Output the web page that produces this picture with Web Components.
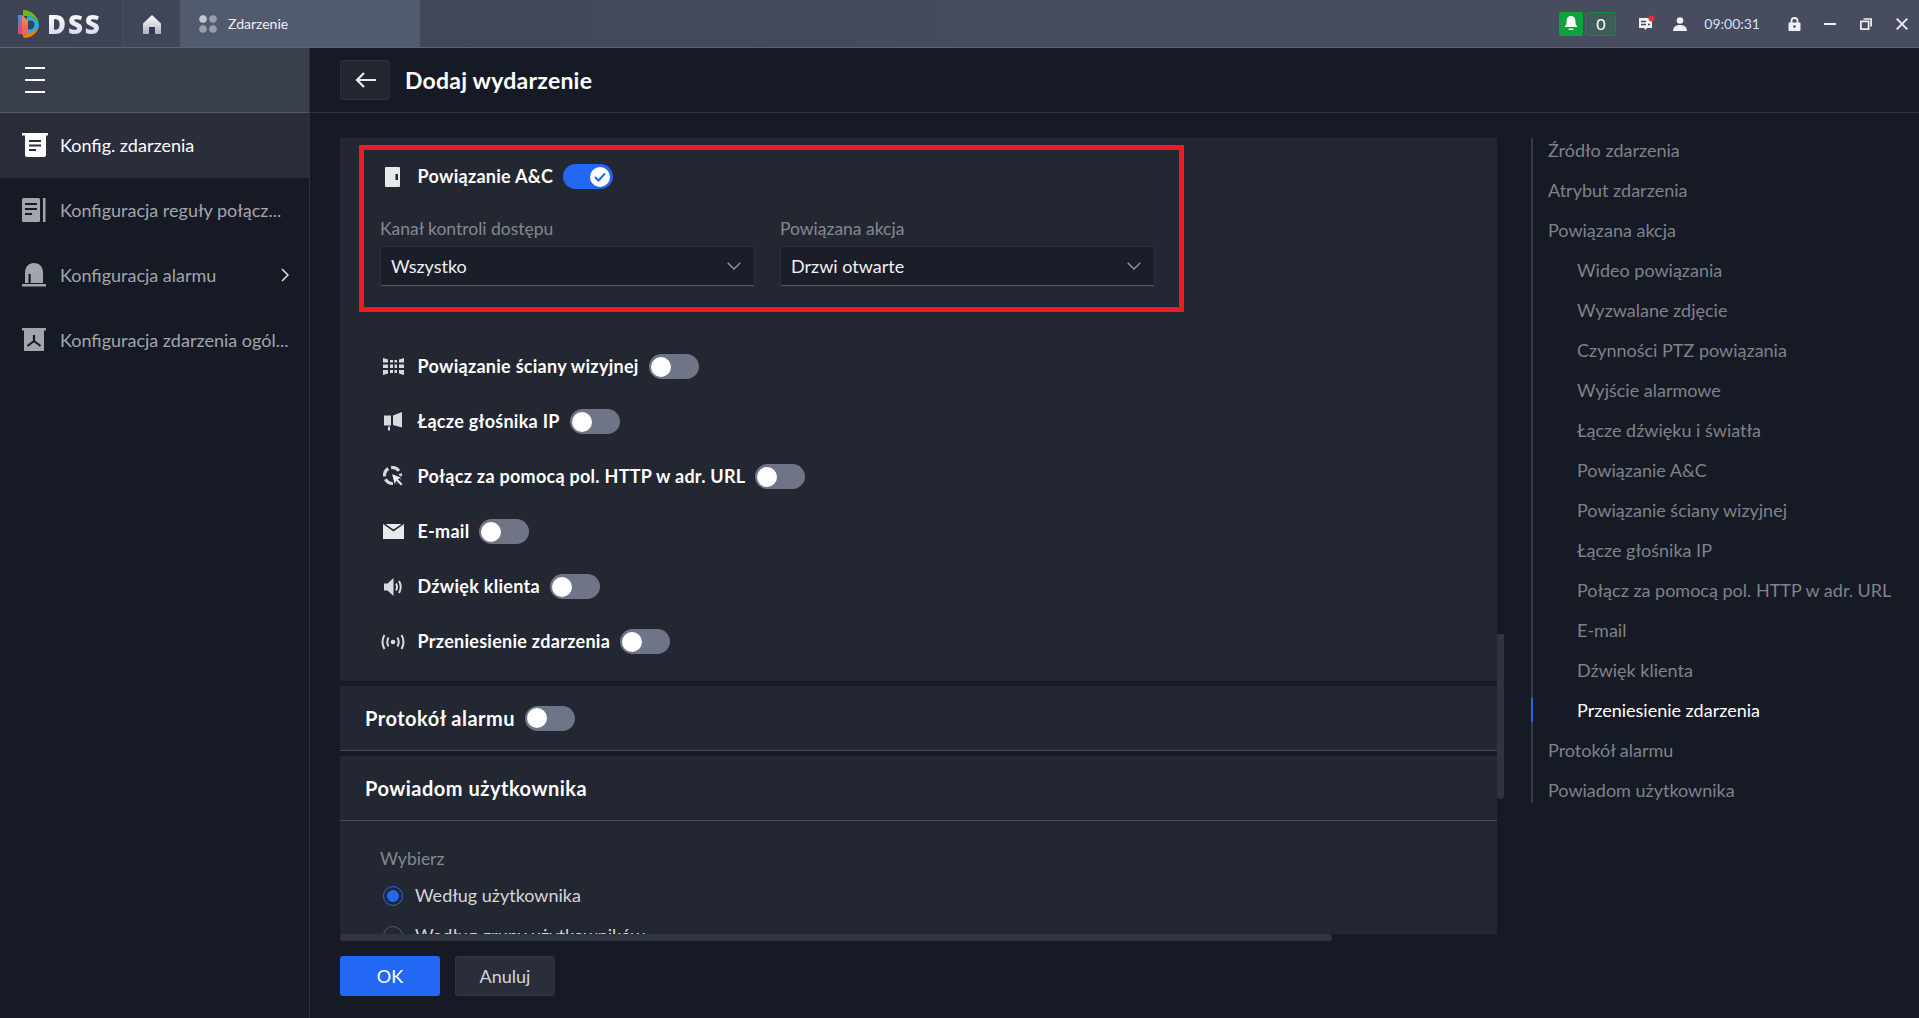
<!DOCTYPE html>
<html lang="pl"><head><meta charset="utf-8"><title>DSS</title>
<style>
html,body{margin:0;height:100%;background:#161a25;overflow:hidden}
body{font-family:Lato,"Liberation Sans",sans-serif;color:#fff}
</style></head><body>
<dss-app></dss-app>
<script>
const ICONS={
home:'<svg width="20" height="20" viewBox="0 0 20 20"><defs><linearGradient id="h" x1="0" y1="0" x2="0" y2="1"><stop offset="0" stop-color="#fff"/><stop offset="1" stop-color="#aeb2c0"/></linearGradient></defs><path fill="url(#h)" d="M10 1 19 9.500V20H13V14H7V20H1V9.500Z"/><rect x="7" y="13" width="6" height="7" fill="#2f3a52"/></svg>',
dots:'<svg width="18" height="18" viewBox="0 0 18 18" fill="#c5c8d0"><circle cx="4" cy="4" r="3.800"/><circle cx="14" cy="4" r="3.800" fill="#9a9eaa"/><circle cx="4" cy="14" r="3.800" fill="#9a9eaa"/><circle cx="14" cy="14" r="3.800" fill="#9a9eaa"/></svg>',
bell:'<svg width="14" height="15" viewBox="0 0 14 15" fill="#fff"><path d="M7 0C3.800 0 2.500 2.500 2.500 5.500V8L0.500 11H13.500L11.500 8V5.500C11.500 2.500 10.200 0 7 0Z"/><rect x="4.500" y="12.500" width="5" height="1.500" rx=".7"/></svg>',
msg:'<svg width="18" height="17" viewBox="0 0 18 17"><path fill="#eef0f4" d="M1 3H14V13H9L7.500 15 6 13H1Z"/><path stroke="#464c5d" stroke-width="1.400" d="M3 6.500H8M3 9.500H8M10 9.500H12"/><circle cx="13.500" cy="3.500" r="3" fill="#ed2a36"/></svg>',
user:'<svg width="14" height="14" viewBox="0 0 14 14" fill="#eef0f4"><circle cx="7" cy="3.500" r="3.300"/><path d="M0 14C0 10 3 8 7 8S14 10 14 14Z"/></svg>',
lock:'<svg width="13" height="14" viewBox="0 0 13 14"><path fill="none" stroke="#eef0f4" stroke-width="1.800" d="M3.500 6V4a3 3 0 0 1 6 0V6"/><rect x="0.500" y="5.500" width="12" height="8.500" rx="1" fill="#eef0f4"/><circle cx="6.500" cy="9.500" r="1.300" fill="#464c5d"/></svg>',
min:'<svg width="12" height="12" viewBox="0 0 12 12"><rect y="5" width="12" height="2" fill="#eef0f4"/></svg>',
restore:'<svg width="12" height="12" viewBox="0 0 12 12" fill="none" stroke="#eef0f4" stroke-width="1.700"><rect x=".9" y="3.400" width="7.700" height="7.700"/><path d="M3.500 1H11.100V8.500"/></svg>',
close:'<svg width="12" height="12" viewBox="0 0 12 12" stroke="#eef0f4" stroke-width="1.800"><path d="M.7.7 11.300 11.300M11.300.7.700 11.300"/></svg>',
ev:'<svg width="26" height="24" viewBox="0 0 26 24"><path fill="currentColor" d="M0 0H26V2.500H24V22a2 2 0 0 1-2 2H5a2 2 0 0 1-2-2V2.500H0Z"/><path stroke="#2a2e3a" stroke-width="2.200" d="M7 8H19M7 12.500H19M7 17H14"/></svg>',
rule:'<svg width="24" height="24" viewBox="0 0 24 24"><rect width="18" height="24" rx="1.500" fill="currentColor"/><rect x="21" width="2.500" height="24" fill="currentColor"/><path stroke="#161a25" stroke-width="2.200" d="M3 6H15M3 11H15M3 16H10"/></svg>',
alarm:'<svg width="24" height="24" viewBox="0 0 24 24"><path fill="currentColor" d="M3 20V10C3 4 6.500 0 12 0S21 4 21 10V20Z"/><rect y="21" width="24" height="2.500" fill="currentColor"/><rect x="6.500" y="11" width="2.200" height="9" fill="#161a25"/></svg>',
gen:'<svg width="24" height="24" viewBox="0 0 24 24"><path fill="currentColor" d="M0 0H24V2.500H22V23H2V2.500H0Z"/><path fill="none" stroke="#161a25" stroke-width="2.200" d="M12 7V13M12 13 5.500 18M12 13 18.500 18"/></svg>',
door:'<svg width="16" height="20" viewBox="0 0 16 20"><rect width="15" height="20" rx="1" fill="#e8e9ec"/><rect x="10.500" y="7" width="2.500" height="6" fill="#232732"/></svg>',
wall:'<svg width="21" height="17" viewBox="0 0 21 17" fill="#d8dade"><path d="M0 0 5 1.500V4.500H0ZM0 6.500H5V10H0ZM0 12H5V15.500L0 17ZM7 2H10V4.500H7ZM7 6.500H10V10H7ZM7 12H10V15H7ZM11.500 2H14V4.500H11.500ZM11.500 6.500H14V10H11.500ZM11.500 12H14V15H11.500ZM16 1.500 21 0V4.500H16ZM16 6.500H21V10H16ZM16 12H21V17L16 15.500Z"/></svg>',
spk:'<svg width="19" height="19" viewBox="0 0 19 19" fill="#d8dade"><rect y="3.500" width="7" height="10"/><path d="M9 3.500 18 0V15.500L9 13Z"/><rect x="4" y="14.500" width="2" height="4"/></svg>',
url:'<svg width="21" height="21" viewBox="0 0 21 21" fill="none"><circle cx="9.500" cy="9.500" r="8" stroke="#d8dade" stroke-width="3.200" stroke-dasharray="9 3"/><path fill="#eceef0" stroke="#232732" stroke-width="1.400" d="M8 7 20 11.500 16 13.500 20.500 18 18 20.500 13.500 16 11.500 20Z"/></svg>',
mail:'<svg width="21" height="15" viewBox="0 0 21 15"><path fill="#e8e9ec" d="M0 0 10.500 7.500 21 0V15H0ZM2.500 0H18.500L10.500 5.500Z"/></svg>',
snd:'<svg width="19" height="18" viewBox="0 0 19 18"><path fill="#d8dade" d="M0 5.500H3.500L9.500 0V18L3.500 12.500H0Z"/><path fill="none" stroke="#d8dade" stroke-width="2" d="M12 5.500Q14 9 12 12.500M15 3Q18.500 9 15 15"/></svg>',
ev2:'<svg width="24" height="16" viewBox="0 0 24 16" fill="none" stroke="#d8dade" stroke-width="2"><circle cx="12" cy="8" r="2.300" fill="#d8dade" stroke="none"/><path d="M7.500 3.500Q5 8 7.500 12.500M16.500 3.500Q19 8 16.500 12.500M3.500 1Q-.5 8 3.500 15M20.500 1Q24.500 8 20.500 15"/></svg>',
back:'<svg width="21" height="16" viewBox="0 0 21 16" fill="none" stroke="#e8e9ec" stroke-width="2.200"><path d="M21 8H2M9 1 2 8 9 15"/></svg>',
chev:'<svg width="14" height="8" viewBox="0 0 14 8" fill="none" stroke="#8d919b" stroke-width="1.500"><path d="M.7.7 7 7 13.300.7"/></svg>',
right:'<svg width="8" height="14" viewBox="0 0 8 14" fill="none" stroke="#e0e2e6" stroke-width="1.500"><path d="M1 1 7 7 1 13"/></svg>',
logo:'<svg width="21" height="28" viewBox="0 0 21 28"><defs><linearGradient id="l1" x1="0" y1="0" x2="0" y2="1"><stop offset="0" stop-color="#3f8fe8"/><stop offset="1" stop-color="#e8407e"/></linearGradient><linearGradient id="l2" x1="0" y1="0" x2="0" y2="1"><stop offset="0" stop-color="#f0a030"/><stop offset=".6" stop-color="#f0605a"/><stop offset="1" stop-color="#f57c0a"/></linearGradient></defs><path fill="#6fb51e" d="M5 0C13 0 20 6 21 14 19 10 14 6 9 6H5Z"/><path fill="#1fb0f0" fill-rule="evenodd" d="M9 6C14 6 19 10 21 14 21 18 19 21 16 23H9ZM10 10.500V19.500H12C15 19.500 16.500 17 16.500 14.500 16.500 12 15 10.500 12 10.500Z"/><path fill="#f57c0a" d="M21 14C21 22 14 28 6 28L9 23C15 23 20 20 21 14Z"/><path fill="url(#l1)" d="M0 5H4V24H0Z"/><path fill="url(#l2)" d="M4 5 10 10.500V19.500L9 23 6 28 4 24Z"/></svg>'
};
function def(name,css,html){
  customElements.define(name,class extends HTMLElement{
    connectedCallback(){
      if(this.shadowRoot)return;
      const s=this.attachShadow({mode:'open'});
      s.innerHTML='<style>'+css+'</style>'+(typeof html==='function'?html(this):html);
    }
  });
}
const A=(e,n,d='')=>e.getAttribute(n)??d;

def('dss-topbar',`
:host{display:flex;align-items:stretch;height:48px;box-sizing:border-box;border-bottom:1px solid #5c6274;background:linear-gradient(90deg,#3d4353,#474d5f 60%);color:#fff}
.logo{width:123px;box-sizing:border-box;padding-left:18px;display:flex;align-items:center;gap:8px;border-right:1px solid #464c5c}
.dss{font:800 26px/1 "Open Sans",Lato,sans-serif;letter-spacing:1.800px;background:linear-gradient(#fff,#d3d9ec);-webkit-background-clip:text;background-clip:text;color:transparent}
.home{width:57px;display:flex;align-items:center;justify-content:center;background:#404657}
.tab{width:240px;background:#525a6e;display:flex;align-items:center;padding-left:19px;box-sizing:border-box;gap:11px;font-size:14px;color:#eef0f6}
.r{margin-left:auto;display:flex;align-items:center}
.bell{width:24px;height:24px;background:#0aa33c;border-radius:2px;display:flex;align-items:center;justify-content:center;margin-right:2px}
.cnt{width:31px;height:24px;box-sizing:border-box;border:1px solid #0f8b3d;border-radius:2px;background:#3f5c5a;font-size:16px;line-height:22px;text-align:center;margin-right:22px}
.time{font-size:14px;color:#d6e0f2;margin:0 28px 0 17px}
`,`<div class="logo">${ICONS.logo}<span class="dss">DSS</span></div>
<div class="home">${ICONS.home}</div>
<div class="tab">${ICONS.dots}<span>Zdarzenie</span></div>
<div class="r">
<div class="bell">${ICONS.bell}</div><div class="cnt">0</div>
${ICONS.msg}<span style="width:17px"></span>${ICONS.user}
<span class="time">09:00:31</span>
${ICONS.lock}<span style="width:23px"></span>${ICONS.min}<span style="width:24px"></span>${ICONS.restore}<span style="width:24px"></span>${ICONS.close}<span style="width:11px"></span>
</div>`);

def('dss-side-item',`
:host{display:flex;align-items:center;height:65px;padding-left:22px;padding-right:20px;padding-bottom:2px;color:#a2a5ad;font-size:18px;gap:12px;box-sizing:border-box}
:host([active]){background:#2a2e3a;color:#fff}
.i{width:26px;display:flex;flex:none}
.t{flex:1;white-space:nowrap}
`,e=>`<span class="i">${ICONS[A(e,'icon')]}</span><span class="t"><slot></slot></span>${e.hasAttribute('more')?ICONS.right:''}`);

def('dss-sidebar',`
:host{display:block;width:310px;background:#161a25;border-right:1px solid #2c303b;box-sizing:border-box}
.top{height:65px;background:#3a3f4d;border-bottom:1px solid #555a69;box-sizing:border-box;padding:19px 25px 0;display:flex;flex-direction:column;gap:10px}
.top i{display:block;width:20px;height:2px;background:#fff}
`,`<div class="top"><i></i><i></i><i></i></div><slot></slot>`);

def('dss-toggle',`
:host{display:inline-flex;width:50px;height:25px;border-radius:13px;background:#6f7486;align-items:center;padding:0 3px 0 2px;box-sizing:border-box;flex:none}
:host([on]){background:#2268f4;justify-content:flex-end}
b{display:flex;width:20px;height:20px;border-radius:50%;background:#fff;align-items:center;justify-content:center}
`,e=>`<b>${e.hasAttribute('on')?'<svg width="12" height="10" viewBox="0 0 12 10" fill="none" stroke="#2268f4" stroke-width="2"><path d="M1 5 4.500 8.500 11 1.500"/></svg>':''}</b>`);

def('dss-link-row',`
:host{display:flex;align-items:center;height:55px;padding-left:41px;box-sizing:border-box;font-weight:700;font-size:18px;letter-spacing:.27px;color:#fff}
.i{width:36.500px;display:flex;flex:none;justify-content:flex-start}
.t{margin-right:10px;white-space:nowrap;padding-bottom:2px}
`,e=>`<span class="i"><span style="display:flex;width:24px;justify-content:center">${ICONS[A(e,'icon')]}</span></span><span class="t"><slot></slot></span><dss-toggle ${e.hasAttribute('on')?'on':''}></dss-toggle>`);

def('dss-select',`
:host{display:block;width:375px}
.l{font-size:17.500px;color:#85888f;line-height:24px;margin-bottom:5px;height:24px}
.b{height:40px;box-sizing:border-box;background:#1a1e29;border:1px solid #2c303c;border-bottom:1px solid #565a68;border-radius:2px;display:flex;align-items:center;justify-content:space-between;padding:0 13px 0 10px;font-size:18px;color:#eef0f4}
`,e=>`<div class="l">${A(e,'label')}</div><div class="b"><slot></slot>${ICONS.chev}</div>`);

def('dss-ac-box',`
:host{display:block;box-sizing:border-box;width:825px;height:167px;margin:7px 0 0 19px;border:5px solid #ed1c24;padding:0 0 0 16px}
.hd{display:flex;align-items:center;height:51px;margin-left:-16px;margin-top:1px}
.hd .i{margin-left:21px;width:32.500px;display:flex}
.hd .t{font-weight:700;font-size:18px;letter-spacing:.27px;margin-right:10px;padding-bottom:2px}
.f{display:flex;gap:25px;margin-top:15px}
`,`<div class="hd"><span class="i">${ICONS.door}</span><span class="t">Powiązanie A&amp;C</span><dss-toggle on></dss-toggle></div><div class="f"><slot></slot></div>`);

def('dss-section',`
:host{display:block;background:#232732;flex:none}
.h{height:65px;box-sizing:border-box;border-bottom:1px solid #474b58;padding-left:25px;display:flex;align-items:center;gap:10px;font-weight:700;font-size:20px;letter-spacing:.5px;color:#fff}
`,e=>`<div class="h"><span>${A(e,'title')}</span>${e.hasAttribute('toggle')?'<dss-toggle></dss-toggle>':''}</div><slot></slot>`);

def('dss-radio',`
:host{display:flex;align-items:center;height:40px;padding-left:43px;gap:12px;font-size:18px;color:#d4d6dc;flex:none}
i{width:20px;height:20px;border-radius:50%;border:1px solid #555a68;box-sizing:border-box;display:flex;align-items:center;justify-content:center}
:host([on]) i{border-color:#2268f4}
:host([on]) i::after{content:"";width:12px;height:12px;border-radius:50%;background:#2268f4}
span{padding-bottom:2px}
`,`<i></i><span><slot></slot></span>`);

def('dss-anchor',`
:host{display:flex;flex-direction:column;gap:16px;border-left:2px solid #363a47;height:665px;box-sizing:border-box;font-size:18px;color:#7e828b;width:370px}
a{display:block;height:24px;line-height:24px;padding-left:15px;margin-left:-2px;border-left:2px solid transparent;white-space:nowrap}
a.c{padding-left:44px}
a.on{border-left-color:#2468e4;color:#fff}
`,e=>JSON.parse(A(e,'items','[]')).map(([t,k])=>`<a class="${k||''}">${t}</a>`).join(''));

def('dss-app',`
:host{display:grid;grid-template-rows:48px 970px;grid-template-columns:310px 1609px;height:1018px;width:1919px}
dss-topbar{grid-column:1/3}
main{min-width:0;display:flex;flex-direction:column;background:#161a25}
.hdr{height:65px;box-sizing:border-box;border-bottom:1px solid #2c303b;display:flex;align-items:center;padding-left:30px;gap:15px;font-weight:700;font-size:23px;letter-spacing:.23px;flex:none}
.bk{width:50px;height:40px;background:#232732;border:1px solid #2c303c;border-radius:3px;box-sizing:border-box;display:flex;align-items:center;justify-content:center}
.body{flex:1;display:flex;padding:25px 0 0 30px;min-height:0}
.col{width:1164px;flex:none}
.rowp{display:flex;height:796px}
.panel{width:1157px;height:796px;overflow:hidden;display:flex;flex-direction:column;gap:5px;flex:none}
.sec1{background:#232732;height:543px;flex:none}
.rows{margin-top:27px}
.vbar{width:7px;height:165px;background:#2f3441;border-radius:0 0 4px 4px;margin-top:496px;flex:none}
.hbar{width:992px;height:7px;background:#2f3441;border-radius:3px}
.btns{display:flex;gap:15px;margin-top:15px}
.btn{width:100px;height:40px;box-sizing:border-box;border-radius:3px;display:flex;align-items:center;justify-content:center;font-size:18px}
.ok{background:#2268f4;color:#fff}
.cancel{background:#2a2e3a;border:1px solid #323643;color:#d4d6dc}
.pick{height:114px;padding-top:26px;box-sizing:border-box}
.pick .w{padding-left:40px;font-size:17.500px;color:#85888f;line-height:24px;margin-bottom:5px}
.nav{margin-left:27px}
`,`<dss-topbar></dss-topbar>
<dss-sidebar>
<dss-side-item icon="ev" active>Konfig. zdarzenia</dss-side-item>
<dss-side-item icon="rule">Konfiguracja reguły połącz...</dss-side-item>
<dss-side-item icon="alarm" more>Konfiguracja alarmu</dss-side-item>
<dss-side-item icon="gen">Konfiguracja zdarzenia ogól...</dss-side-item>
</dss-sidebar>
<main>
<div class="hdr"><div class="bk">${ICONS.back}</div><span>Dodaj wydarzenie</span></div>
<div class="body">
<div class="col">
<div class="rowp">
<div class="panel">
<div class="sec1">
<dss-ac-box>
<dss-select label="Kanał kontroli dostępu">Wszystko</dss-select>
<dss-select label="Powiązana akcja">Drzwi otwarte</dss-select>
</dss-ac-box>
<div class="rows">
<dss-link-row icon="wall">Powiązanie ściany wizyjnej</dss-link-row>
<dss-link-row icon="spk">Łącze głośnika IP</dss-link-row>
<dss-link-row icon="url">Połącz za pomocą pol. HTTP w adr. URL</dss-link-row>
<dss-link-row icon="mail">E-mail</dss-link-row>
<dss-link-row icon="snd">Dźwięk klienta</dss-link-row>
<dss-link-row icon="ev2">Przeniesienie zdarzenia</dss-link-row>
</div>
</div>
<dss-section title="Protokół alarmu" toggle></dss-section>
<dss-section title="Powiadom użytkownika">
<div class="pick"><div class="w">Wybierz</div>
<dss-radio on>Według użytkownika</dss-radio>
<dss-radio>Według grupy użytkowników</dss-radio></div>
</dss-section>
</div>
<div class="vbar"></div>
</div>
<div class="hbar"></div>
<div class="btns"><div class="btn ok">OK</div><div class="btn cancel">Anuluj</div></div>
</div>
<div class="nav"><dss-anchor items='[["Źródło zdarzenia"],["Atrybut zdarzenia"],["Powiązana akcja"],["Wideo powiązania","c"],["Wyzwalane zdjęcie","c"],["Czynności PTZ powiązania","c"],["Wyjście alarmowe","c"],["Łącze dźwięku i światła","c"],["Powiązanie A&amp;C","c"],["Powiązanie ściany wizyjnej","c"],["Łącze głośnika IP","c"],["Połącz za pomocą pol. HTTP w adr. URL","c"],["E-mail","c"],["Dźwięk klienta","c"],["Przeniesienie zdarzenia","c on"],["Protokół alarmu"],["Powiadom użytkownika"]]'></dss-anchor></div>
</div>
</main>`);
</script>
</body></html>
